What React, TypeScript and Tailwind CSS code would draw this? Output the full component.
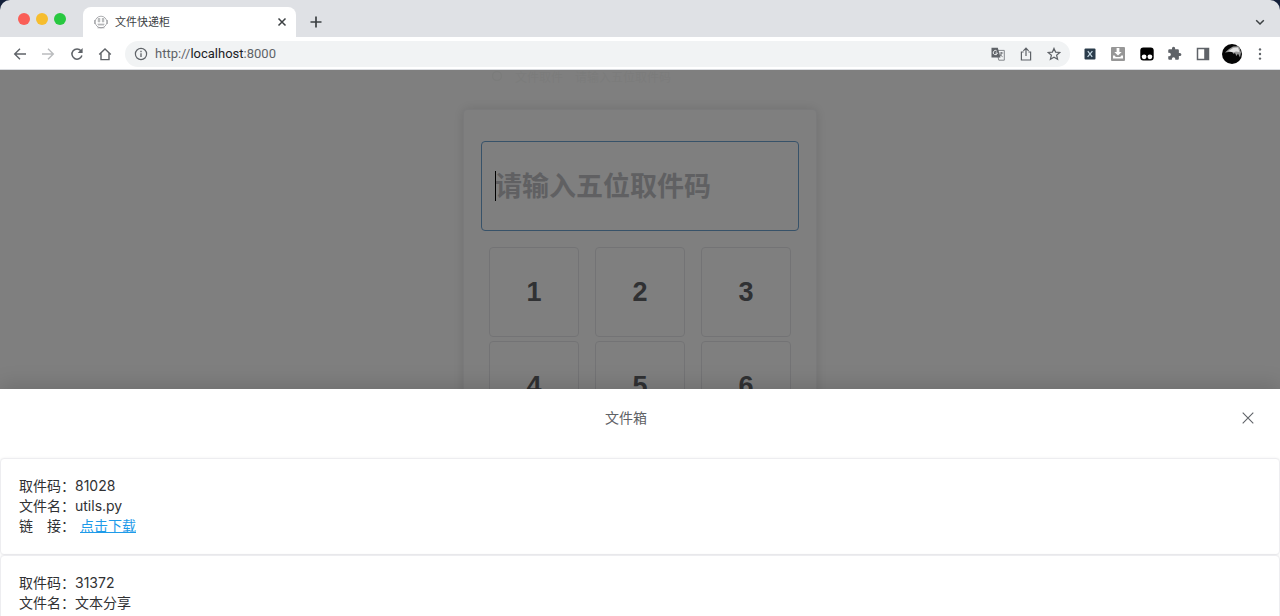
import type { ReactNode } from "react";

interface BoxFile {
  code: string;
  name: string;
  url?: string;
}

const files: BoxFile[] = [
  { code: "81028", name: "utils.py", url: "#download" },
  { code: "31372", name: "文本分享" },
];

const keys = ["1", "2", "3", "4", "5", "6"];

interface IconButtonProps {
  label: string;
  children: ReactNode;
}

function IconButton({ label, children }: IconButtonProps) {
  return (
    <button
      type="button"
      aria-label={label}
      className="flex size-5 shrink-0 items-center justify-center text-[#5f6368]"
    >
      {children}
    </button>
  );
}

function TabStrip() {
  return (
    <div className="flex h-[37px] items-end rounded-t-[10px] bg-[#dfe1e5] pr-[10px]">
      {/* Window controls */}
      <div className="flex items-center gap-[6px] self-center pl-[18px] pr-[17px]">
        <span className="size-3 rounded-full bg-[#fa5e57]" />
        <span className="size-3 rounded-full bg-[#f6bd2e]" />
        <span className="size-3 rounded-full bg-[#28c840]" />
      </div>

      {/* Active tab */}
      <div className="flex h-[30px] w-[213px] items-center rounded-t-lg bg-white pl-[11px] pr-1">
        <svg
          viewBox="0 0 14 14"
          className="size-[14px]"
          fill="none"
          stroke="#8b8d90"
          strokeWidth="0.7"
        >
          <circle cx="7" cy="7" r="5.8" />
          <path d="M.4 5v4M13.600 5v4M3.500 12.800h7M3.500 9.200h7M5 3v4.400M9 3v4.400M3.600 4h2.800M7.800 4h2.600M3.600 6h2.800M7.800 6h2.600M5 9.200v1.600M7 9.200v1.600M9 9.200v1.600" />
        </svg>
        <span className="ml-[7px] flex-1 text-[11px] text-[#3c4043]">
          文件快递柜
        </span>
        <IconButton label="关闭标签页">
          <svg viewBox="0 0 12 12" className="size-3" stroke="#3c4043" strokeWidth="1.500">
            <path d="M2.500 2.500l7 7M9.500 2.500l-7 7" />
          </svg>
        </IconButton>
      </div>

      <div className="flex h-[30px] flex-1 items-center justify-between pl-[10px]">
        <IconButton label="新标签页">
          <svg viewBox="0 0 14 14" className="size-[14px]" stroke="#3c4043" strokeWidth="1.700">
            <path d="M7 1.500v11M1.500 7h11" />
          </svg>
        </IconButton>
        <IconButton label="搜索标签页">
          <svg viewBox="0 0 12 12" className="size-3" fill="none" stroke="#3c4043" strokeWidth="1.500">
            <path d="M2.200 4.200L6 8l3.800-3.800" />
          </svg>
        </IconButton>
      </div>
    </div>
  );
}

function Toolbar() {
  return (
    <div className="flex h-[33px] items-center gap-[10px] border-b border-[#dadce0] bg-white px-[10px] pt-px">
      <div className="flex w-[105px] justify-between">
        <IconButton label="后退">
          <svg viewBox="0 0 14 14" className="size-[14px]" fill="none" stroke="currentColor" strokeWidth="1.400">
            <path d="M13 7H2M7 1.700L1.700 7 7 12.300" />
          </svg>
        </IconButton>
        <IconButton label="前进">
          <svg viewBox="0 0 14 14" className="size-[14px]" fill="none" stroke="#babcbe" strokeWidth="1.400">
            <path d="M1 7h11M7 1.700L12.300 7 7 12.300" />
          </svg>
        </IconButton>
        <IconButton label="重新加载">
          <svg viewBox="0 0 14 14" className="size-[14px]" fill="none" stroke="currentColor" strokeWidth="1.500">
            <path d="M11.900 8.600A5.100 5.100 0 1 1 11 3.800" />
            <path d="M12.600 1v4.900H7.700z" fill="currentColor" stroke="none" />
          </svg>
        </IconButton>
        <IconButton label="主页">
          <svg viewBox="0 0 14 14" className="size-[14px]" fill="none" stroke="currentColor" strokeWidth="1.400">
            <path d="M1.200 7.500L7 2l5.800 5.500M3 6.200v6.400h8V6.200" />
          </svg>
        </IconButton>
      </div>

      {/* Address bar */}
      <div className="flex h-[26px] flex-1 items-center rounded-full bg-[#f1f3f4] px-[6px]">
        <IconButton label="网站信息">
          <svg viewBox="0 0 14 14" className="size-[14px]" fill="none" stroke="currentColor" strokeWidth="1.200">
            <circle cx="7" cy="7" r="5.600" />
            <path d="M7 6.200v3.800M7 3.800v1.400" strokeWidth="1.300" />
          </svg>
        </IconButton>
        <span className="ml-1 flex-1 font-[Roboto,sans-serif] text-[13px] leading-5 text-[#5f6368]">
          http://<span className="text-[#202124]">localhost</span>:8000
        </span>
        <div className="flex gap-2">
          <IconButton label="翻译此页">
            <svg viewBox="0 0 14 14" className="size-[14px]" fill="none">
              <path d="M5.500 3.400h7.800v9.800H7.800z" stroke="#85888c" strokeWidth="1" />
              <path d="M.5.800h6.300l2.700 9.800h-9z" fill="#5f6368" />
              <path d="M5.900 4.200A2.100 2.100 0 1 0 6.400 6H4.500" stroke="#f1f3f4" strokeWidth="1" />
              <path d="M8.600 6h3.600M10.400 5v1c0 1.600-.6 2.600-1.500 3.400M9 7.200c.6 1.200 1.500 1.900 2.600 2.500" stroke="#6f7276" strokeWidth="0.900" />
            </svg>
          </IconButton>
          <IconButton label="分享">
            <svg viewBox="0 0 14 14" className="size-[14px]" fill="none" stroke="currentColor" strokeWidth="1.200">
              <path d="M4.600 5H2.400v8h9.200V5H9.400M7 9V1.400M4.400 3.800L7 1.200l2.600 2.600" />
            </svg>
          </IconButton>
          <IconButton label="收藏">
            <svg viewBox="0 0 14 14" className="size-[14px]" fill="none" stroke="currentColor" strokeWidth="1.200">
              <path d="M7 1.400l1.600 3.700 4.200.4-3.200 2.700 1 4.100L7 10.200l-3.600 2.100 1-4.100-3.200-2.700 4.200-.4z" />
            </svg>
          </IconButton>
        </div>
      </div>

      {/* Extensions */}
      <div className="flex w-[190px] justify-between">
        <IconButton label="扩展 X">
          <svg viewBox="0 0 12 12" className="size-3">
            <rect x="0.500" y="0.500" width="11" height="11" rx="1" fill="#2b3c4b" />
            <path d="M3.800 3.200l4.400 5.600M8.400 3.200L3.600 8.800" stroke="#c9dbe6" strokeWidth="1.200" />
          </svg>
        </IconButton>
        <IconButton label="下载助手">
          <svg viewBox="0 0 16 16" className="size-4">
            <rect x="1" y="1" width="14" height="14" rx="1" fill="#979797" />
            <path d="M6.600 2h2.800v4h2.300L8 9.600 4.300 6h2.300zM3 9.600h1.600l1.200 1.500h4.400l1.200-1.500H13v3H3z" fill="#fff" />
          </svg>
        </IconButton>
        <IconButton label="脚本管理">
          <svg viewBox="0 0 14 14" className="size-[14px]">
            <rect x="0.300" y="0.500" width="13.400" height="13" rx="3" fill="#000" />
            <circle cx="4.100" cy="9.800" r="2.400" fill="#fff" />
            <circle cx="9.900" cy="9.800" r="2.400" fill="#fff" />
          </svg>
        </IconButton>
        <IconButton label="扩展程序">
          <svg viewBox="0 0 24 24" className="size-[15px]" fill="currentColor">
            <path d="M20.500 11H19V7c0-1.100-.9-2-2-2h-4V3.500a2.500 2.500 0 0 0-5 0V5H4c-1.100 0-2 .9-2 2v3.800h1.500a2.700 2.700 0 0 1 0 5.400H2V20c0 1.100.9 2 2 2h3.800v-1.500a2.700 2.700 0 0 1 5.400 0V22H17c1.100 0 2-.9 2-2v-4h1.500a2.500 2.500 0 0 0 0-5z" />
          </svg>
        </IconButton>
        <IconButton label="侧边栏">
          <svg viewBox="0 0 14 14" className="size-[14px]">
            <rect x="1.500" y="1.500" width="11" height="11" fill="none" stroke="currentColor" strokeWidth="1.500" />
            <path d="M8.200 1.500h4.500v11H8.200z" fill="currentColor" />
          </svg>
        </IconButton>
        <IconButton label="个人资料">
          <svg viewBox="0 0 20 20" className="size-5">
            <circle cx="10" cy="10" r="10" fill="#050505" />
            <path d="M3 8.500L7 5l4-2.500 6-.3 2 6.300-1 5-2-4-1.500 2.500-1.500-3-1.500 1-1-2.500z" fill="#9a9a9a" />
            <path d="M6.500 7l5-3.200 4.500-.3 1.500 4.500-3.500-.5-3 1z" fill="#e3e3e3" />
          </svg>
        </IconButton>
        <IconButton label="更多">
          <svg viewBox="0 0 14 14" className="size-[14px]" fill="currentColor">
            <circle cx="7" cy="2.400" r="1.200" />
            <circle cx="7" cy="7" r="1.200" />
            <circle cx="7" cy="11.600" r="1.200" />
          </svg>
        </IconButton>
      </div>
    </div>
  );
}

function PickupPage() {
  return (
    <main className="flex flex-col items-center">
      {/* Nearly white hint line above the card */}
      <div className="flex h-[39px] w-[354px] gap-3 pl-7 text-xs leading-4 text-[#f7f8f7]">
        <svg viewBox="0 0 12 12" className="size-3" fill="none" stroke="currentColor" strokeWidth="1.500">
          <circle cx="6" cy="6" r="4.500" />
        </svg>
        <span>文件取件</span>
        <span>请输入五位取件码</span>
      </div>
      <section className="w-[354px] rounded border border-[#f4f5f7] bg-white px-[17px] py-[31px] shadow-[0_0_12px_rgba(0,0,0,0.12)]">
        <div className="relative">
          <input
            type="text"
            aria-label="取件码"
            placeholder="请输入五位取件码"
            className="block h-[90px] w-full rounded border border-[#6ea4d3] px-[13px] text-[27px] font-bold outline-none placeholder:text-[#c0c1c5]"
          />
          <span className="absolute left-[14px] top-[30px] h-[30px] w-px bg-black" />
        </div>
        <div className="mt-4 grid grid-cols-3 justify-items-center gap-y-1">
          {keys.map((key) => (
            <button
              key={key}
              type="button"
              className="h-[90px] w-[90px] rounded-sm border border-[#e6e7ea] font-['Liberation_Sans',sans-serif] text-[27px] font-bold text-[#606266]"
            >
              {key}
            </button>
          ))}
        </div>
      </section>
    </main>
  );
}

function FileCard({ file }: { file: BoxFile }) {
  return (
    <li className="h-[97px] rounded-sm border border-[#ededf0] bg-white px-[18px] py-[17px] text-sm leading-5 text-[#303133] shadow-[0_0_3px_rgba(0,0,0,0.06)]">
      <p>取件码：{file.code}</p>
      <p>文件名：{file.name}</p>
      {file.url && (
        <p>
          链　接：
          <a href={file.url} className="ml-[5px] text-[#1e9be9] underline">
            点击下载
          </a>
        </p>
      )}
    </li>
  );
}

function FileDrawer() {
  return (
    <aside
      aria-label="文件箱"
      className="absolute inset-x-0 bottom-0 h-[227px] overflow-hidden bg-white shadow-[0_-4px_20px_rgba(0,0,0,0.14)]"
    >
      <header className="flex h-[69px] items-start pl-[14px] pr-[22px] pt-[19px]">
        <h2 className="flex-1 text-center text-sm leading-5 text-[#606266]">
          文件箱
        </h2>
        <IconButton label="关闭">
          <svg viewBox="0 0 14 14" className="size-[14px]" stroke="currentColor" strokeWidth="1.100">
            <path d="M1.700 1.700l10.600 10.600M12.300 1.700L1.700 12.300" />
          </svg>
        </IconButton>
      </header>
      <ul>
        {files.map((file) => (
          <FileCard key={file.code} file={file} />
        ))}
      </ul>
    </aside>
  );
}

export default function App() {
  return (
    <div className="flex h-screen flex-col overflow-hidden bg-[#14203a] font-[Inter,'Noto_Sans_CJK_SC',sans-serif]">
      <TabStrip />
      <Toolbar />
      <div className="relative flex-1 overflow-hidden bg-white">
        <PickupPage />
        {/* Modal mask */}
        <div className="absolute inset-0 bg-black/50" />
        <FileDrawer />
      </div>
    </div>
  );
}
